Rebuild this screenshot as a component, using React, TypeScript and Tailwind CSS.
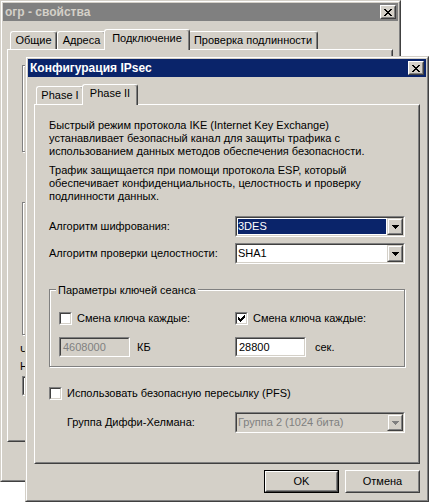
import React from "react";

const X_ROWS = ["##....##", ".##..##.", "..####..", "...##...", "..####..", ".##..##.", "##....##"];
const CHECK_ROWS = ["......#", ".....##", "#...###", "##.###.", "#####..", ".###...", "..#...."];
const ARROW_ROWS = ["#######", ".#####.", "..###..", "...#..."];

function Pix({ rows, color }: { rows: string[]; color: string }) {
  const w = rows[0].length;
  const h = rows.length;
  return (
    <svg width={w} height={h} viewBox={`0 0 ${w} ${h}`} shapeRendering="crispEdges">
      {rows.flatMap((r, y) =>
        r.split("").map((c, x) =>
          c === "#" ? <rect key={`${x}-${y}`} x={x} y={y} width="1" height="1" fill={color} /> : null
        )
      )}
    </svg>
  );
}

function CloseBtn() {
  return (
    <div className="w-[16px] h-[14px] border border-t-white border-l-white border-b-[#404040] border-r-[#404040] bg-[#d4d0c8]">
      <div className="w-full h-full border border-t-[#d4d0c8] border-l-[#d4d0c8] border-b-[#808080] border-r-[#808080] flex items-center justify-center">
        <Pix rows={X_ROWS} color="#000" />
      </div>
    </div>
  );
}

function TitleBar({ title, active }: { title: string; active: boolean }) {
  return (
    <div
      className={`h-[18px] shrink-0 flex items-center justify-between pl-[2px] pr-[2px] ${
        active ? "bg-[#0a246a] text-white" : "bg-[#808080] text-[#d4d0c8]"
      }`}
    >
      <span className="font-bold text-[12px] leading-[14px]">{title}</span>
      <CloseBtn />
    </div>
  );
}

function Tab({ label, selected, w }: { label: string; selected?: boolean; w: string }) {
  if (selected) {
    return (
      <div
        className={`relative z-10 -mx-[2px] -mb-px h-[21px] ${w} bg-[#d4d0c8] border-l border-t border-r border-l-white border-t-white border-r-[#404040] rounded-t-[3px] shadow-[inset_-1px_0_0_#808080] flex justify-center pt-[2px]`}
      >
        <span className="leading-[13px]">{label}</span>
      </div>
    );
  }
  return (
    <div
      className={`h-[18px] ${w} bg-[#d4d0c8] border-l border-t border-r border-l-white border-t-white border-r-[#404040] rounded-t-[3px] shadow-[inset_-1px_0_0_#808080] flex justify-center pt-[2px]`}
    >
      <span className="leading-[13px]">{label}</span>
    </div>
  );
}

function Panel({ h, children }: { h: string; children?: React.ReactNode }) {
  return (
    <div className={`${h} border border-t-white border-l-white border-b-[#404040] border-r-[#404040]`}>
      <div className="h-full border border-t-[#d4d0c8] border-l-[#d4d0c8] border-b-[#808080] border-r-[#808080]">
        {children}
      </div>
    </div>
  );
}

function DropBtn({ disabled }: { disabled?: boolean }) {
  return (
    <div className="w-[16px] h-full shrink-0 bg-[#d4d0c8] border border-t-[#d4d0c8] border-l-[#d4d0c8] border-b-[#404040] border-r-[#404040]">
      <div className="w-full h-full border border-t-white border-l-white border-b-[#808080] border-r-[#808080] flex items-center justify-center">
        <Pix rows={ARROW_ROWS} color={disabled ? "#808080" : "#000"} />
      </div>
    </div>
  );
}

function Combo({ value, selected, disabled }: { value: string; selected?: boolean; disabled?: boolean }) {
  return (
    <div className="w-[170px] h-[21px] shrink-0 border border-t-[#808080] border-l-[#808080] border-b-white border-r-white">
      <div
        className={`h-full flex border border-t-[#404040] border-l-[#404040] border-b-[#d4d0c8] border-r-[#d4d0c8] ${
          disabled ? "bg-[#d4d0c8]" : "bg-white"
        }`}
      >
        <div className="flex-1 flex p-px">
          <div
            className={`flex-1 flex items-center leading-[13px] ${
              selected ? "bg-[#0a246a] text-white" : disabled ? "text-[#808080]" : "text-black"
            }`}
          >
            {value}
          </div>
        </div>
        <DropBtn disabled={disabled} />
      </div>
    </div>
  );
}

function TextBox({ value, disabled }: { value: string; disabled?: boolean }) {
  return (
    <div className="w-[71px] h-[20px] shrink-0 border border-t-[#808080] border-l-[#808080] border-b-white border-r-white">
      <div
        className={`h-full flex items-center pl-[2px] leading-[13px] border border-t-[#404040] border-l-[#404040] border-b-[#d4d0c8] border-r-[#d4d0c8] ${
          disabled ? "bg-[#d4d0c8] text-[#808080]" : "bg-white text-black"
        }`}
      >
        {value}
      </div>
    </div>
  );
}

function CheckBox({ checked }: { checked?: boolean }) {
  return (
    <div className="w-[13px] h-[13px] shrink-0 border border-t-[#808080] border-l-[#808080] border-b-white border-r-white">
      <div className="w-full h-full bg-white border border-t-[#404040] border-l-[#404040] border-b-[#d4d0c8] border-r-[#d4d0c8] flex items-center justify-center">
        {checked ? <Pix rows={CHECK_ROWS} color="#000" /> : null}
      </div>
    </div>
  );
}

function Button({ label, def }: { label: string; def?: boolean }) {
  if (def) {
    return (
      <div className="w-[75px] h-[23px] border border-black">
        <div className="w-full h-full border border-t-white border-l-white border-b-[#404040] border-r-[#404040]">
          <div className="w-full h-full border border-t-[#d4d0c8] border-l-[#d4d0c8] border-b-[#808080] border-r-[#808080] flex items-center justify-center leading-[13px]">
            {label}
          </div>
        </div>
      </div>
    );
  }
  return (
    <div className="w-[75px] h-[23px] border border-t-white border-l-white border-b-[#404040] border-r-[#404040]">
      <div className="w-full h-full border border-t-[#d4d0c8] border-l-[#d4d0c8] border-b-[#808080] border-r-[#808080] flex items-center justify-center leading-[13px]">
        {label}
      </div>
    </div>
  );
}

function GroupLine({ h }: { h: string }) {
  return <div className={`${h} w-[340px] border border-[#808080] shadow-[inset_1px_1px_0_#fff,1px_1px_0_#fff]`} />;
}

function BackWindow() {
  return (
    <div className="absolute left-0 top-0 w-[401px] h-[482px] border border-t-[#d4d0c8] border-l-[#d4d0c8] border-b-[#404040] border-r-[#404040]">
      <div className="h-full flex flex-col p-px bg-[#d4d0c8] border border-t-white border-l-white border-b-[#808080] border-r-[#808080]">
        <TitleBar title="огр - свойства" active={false} />
        <div className="pl-[4px] pr-[5px] pt-[8px]">
          <div className="flex items-end h-[20px] pl-[3px]">
            <Tab label="Общие" w="w-[47px]" />
            <Tab label="Адреса" w="w-[49px]" />
            <Tab label="Подключение" w="w-[86px]" selected />
            <Tab label="Проверка подлинности" w="w-[130px]" />
          </div>
          <Panel h="h-[393px]">
            <div className="pl-[13px] pt-[14px] flex flex-col">
              <GroupLine h="h-[87px]" />
              <div className="mt-[50px]">
                <GroupLine h="h-[133px]" />
              </div>
              <div className="-ml-[2px] mt-[7px] leading-[16px]">
                <div>Чтобы</div>
                <div>Номер</div>
              </div>
              <div className="mt-[2px]">
                <TextBox value="" />
              </div>
            </div>
          </Panel>
        </div>
      </div>
    </div>
  );
}

function FrontWindow() {
  return (
    <div className="absolute left-[25px] top-[56px] w-[404px] h-[446px] border border-t-[#d4d0c8] border-l-[#d4d0c8] border-b-[#404040] border-r-[#404040]">
      <div className="h-full flex flex-col p-px bg-[#d4d0c8] border border-t-white border-l-white border-b-[#808080] border-r-[#808080]">
        <TitleBar title="Конфигурация IPsec" active />
        <div className="px-[6px] pt-[7px] flex flex-col">
          <div className="flex items-end h-[20px] pl-[2px]">
            <Tab label="Phase I" w="w-[48px]" />
            <Tab label="Phase II" w="w-[56px]" selected />
          </div>
          <Panel h="h-[360px]">
            <div className="px-[13px] pt-[13px] flex flex-col leading-[13px]">
              <p>
                Быстрый режим протокола IKE (Internet Key Exchange)
                <br />
                устанавливает безопасный канал для защиты трафика с
                <br />
                использованием данных методов обеспечения безопасности.
              </p>
              <p className="mt-[6px]">
                Трафик защищается при помощи протокола ESP, который
                <br />
                обеспечивает конфиденциальность, целостность и проверку
                <br />
                подлинности данных.
              </p>
              <div className="mt-[13px] flex items-center">
                <span className="w-[186px] shrink-0">Алгоритм шифрования:</span>
                <Combo value="3DES" selected />
              </div>
              <div className="mt-[6px] flex items-center">
                <span className="w-[186px] shrink-0">Алгоритм проверки целостности:</span>
                <Combo value="SHA1" />
              </div>
              <div className="relative mt-[25px] h-[78px] border border-[#808080] shadow-[inset_1px_1px_0_#fff,1px_1px_0_#fff] pl-[9px] pt-[22px]">
                <span className="absolute left-[6px] -top-[6px] px-[2px] bg-[#d4d0c8] leading-[13px]">
                  Параметры ключей сеанса
                </span>
                <div className="grid grid-cols-[176px_1fr]">
                  <div className="flex items-center h-[13px]">
                    <CheckBox />
                    <span className="ml-[5px]">Смена ключа каждые:</span>
                  </div>
                  <div className="flex items-center h-[13px]">
                    <CheckBox checked />
                    <span className="ml-[5px]">Смена ключа каждые:</span>
                  </div>
                  <div className="flex items-center mt-[12px]">
                    <TextBox value="4608000" disabled />
                    <span className="ml-[7px]">КБ</span>
                  </div>
                  <div className="flex items-center mt-[12px]">
                    <TextBox value="28800" />
                    <span className="ml-[9px]">сек.</span>
                  </div>
                </div>
              </div>
              <div className="mt-[20px] flex items-center h-[13px]">
                <CheckBox />
                <span className="ml-[5px]">Использовать безопасную пересылку (PFS)</span>
              </div>
              <div className="mt-[12px] flex items-center pl-[18px]">
                <span className="w-[168px] shrink-0">Группа Диффи-Хелмана:</span>
                <Combo value="Группа 2 (1024 бита)" disabled />
              </div>
            </div>
          </Panel>
          <div className="mt-[6px] flex justify-end gap-[6px]">
            <Button label="OK" def />
            <Button label="Отмена" />
          </div>
        </div>
      </div>
    </div>
  );
}

export default function App() {
  return (
    <div className="relative w-[429px] h-[502px] bg-white overflow-hidden text-[11px] text-black font-['Liberation_Sans',Arial,sans-serif]">
      <BackWindow />
      <FrontWindow />
    </div>
  );
}
